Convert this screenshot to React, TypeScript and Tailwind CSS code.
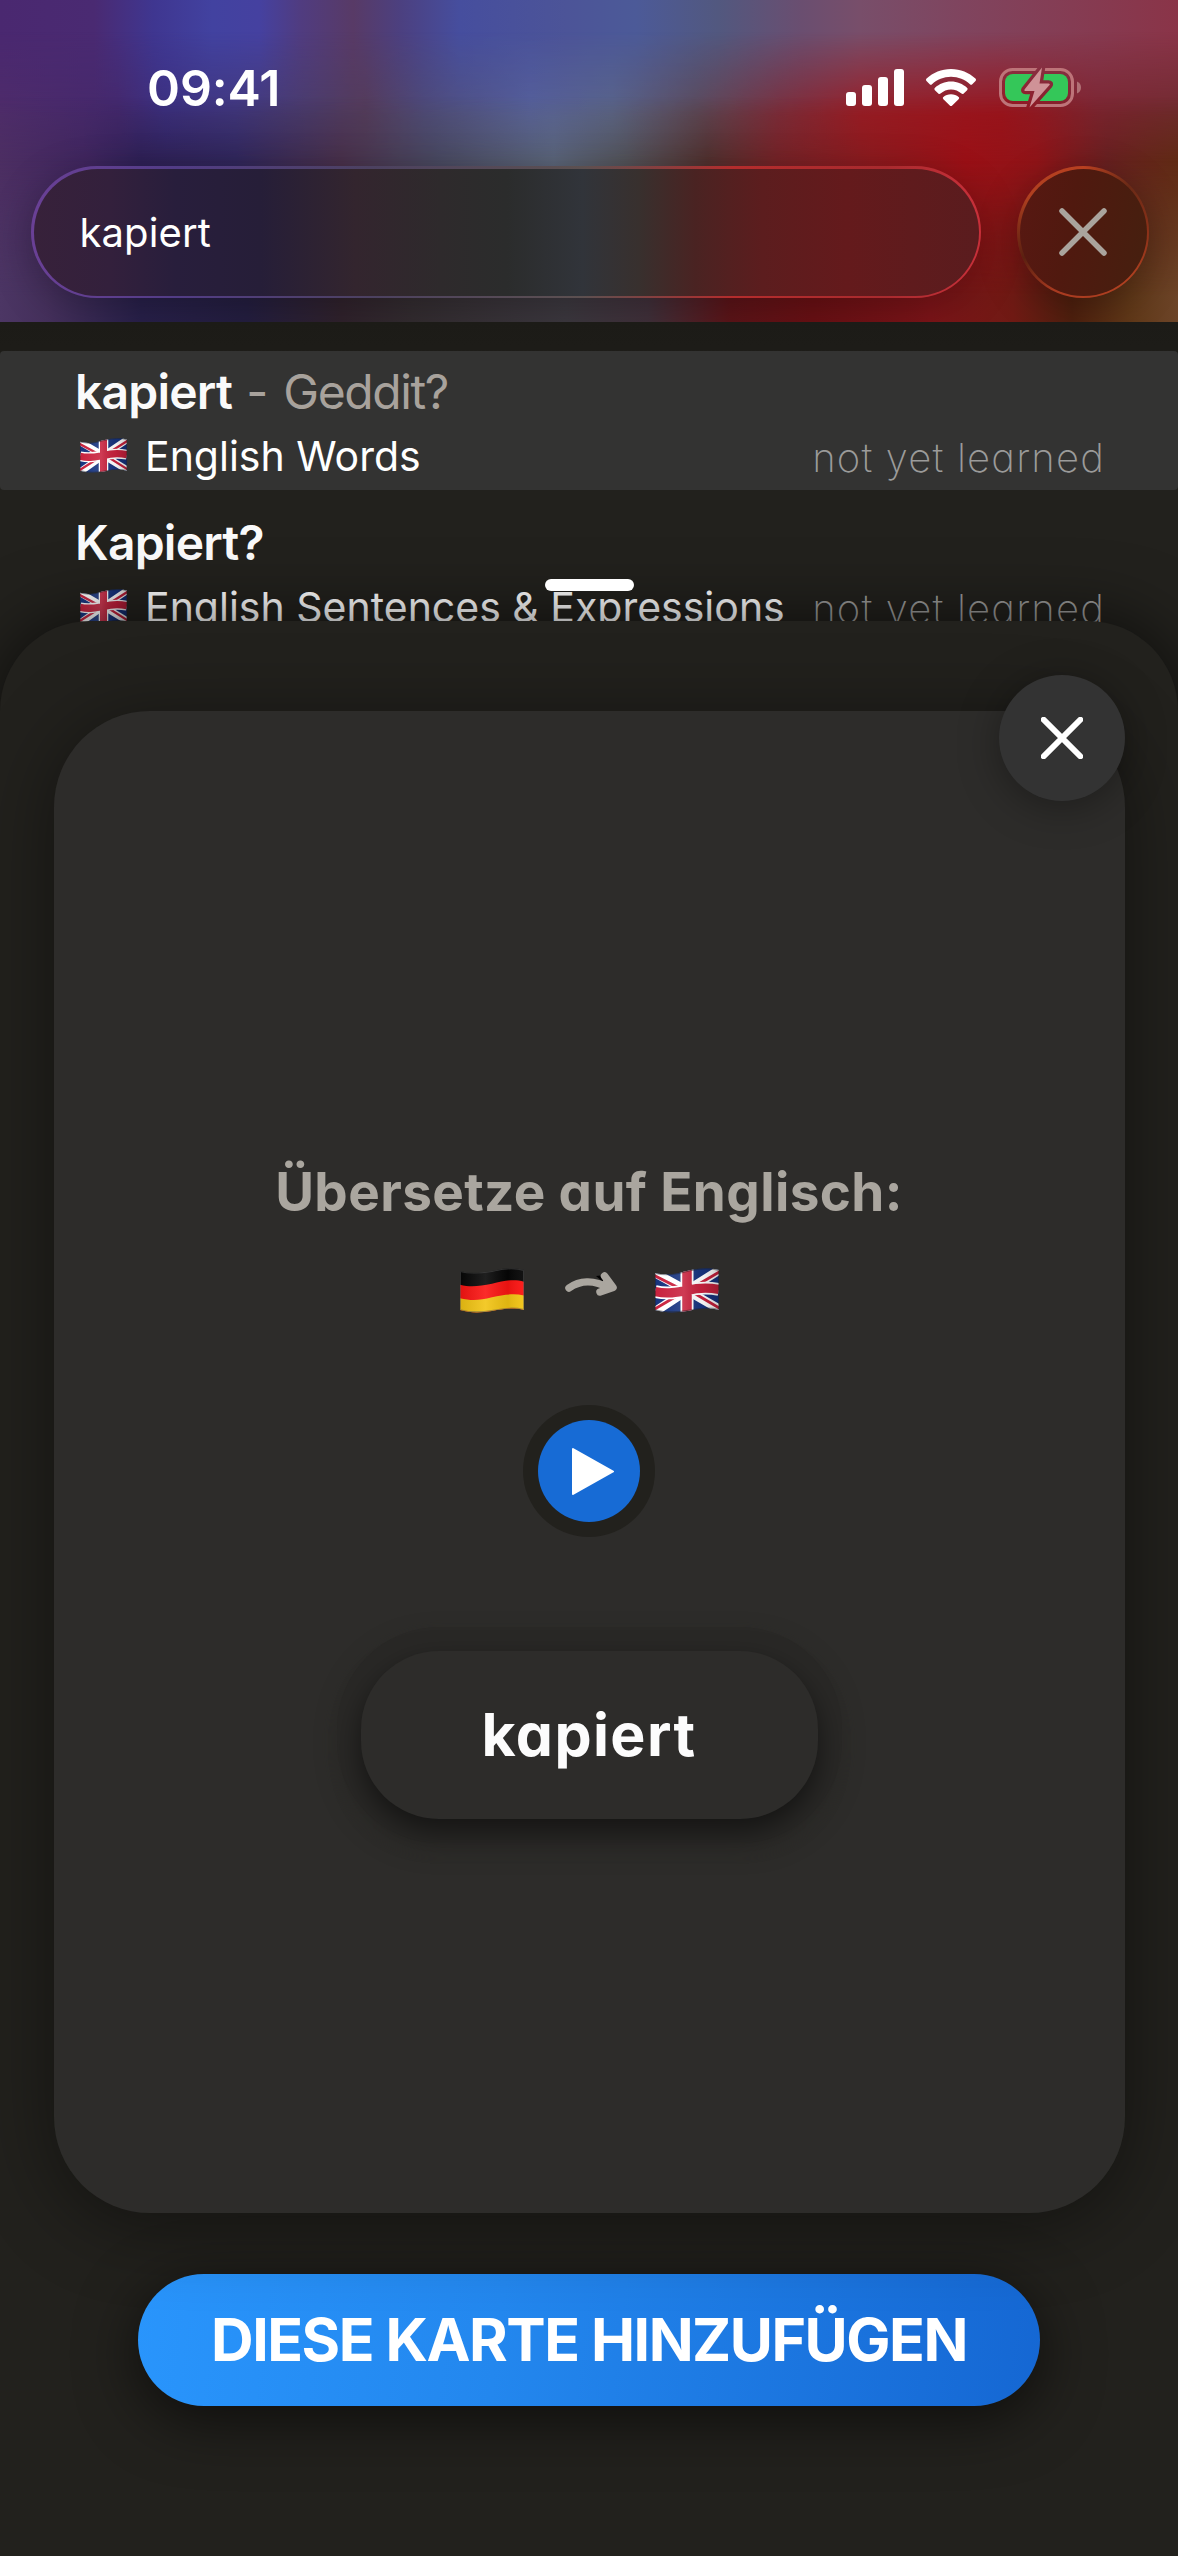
import React, { useId } from 'react';

interface SearchResult {
  term: string;
  translation?: string;
  deck: string;
  status: string;
  selected?: boolean;
}

const results: SearchResult[] = [
  { term: 'kapiert', translation: 'Geddit?', deck: 'English Words', status: 'not yet learned', selected: true },
  { term: 'Kapiert?', deck: 'English Sentences & Expressions', status: 'not yet learned' }
];

// Horizontal colour bands of the header, from top to bottom
const headerBands = [
  'h-full bg-[linear-gradient(90deg,#4a2870_0%,#4a2a72_8%,#3f3690_13%,#4242a0_18%,#4541a0_22%,#503c80_25.5%,#583a66_30%,#4c4080_34%,#464e9e_39%,#4c5498_48%,#4c5a98_54%,#52587f_61%,#6a4e70_68%,#784e6a_73%,#80445e_82%,#8a3448_100%)]',
  'h-full bg-[linear-gradient(90deg,#4e2c6a_0%,#44286c_10%,#3c3080_14%,#42387e_20%,#4a3c6c_26%,#543c5a_31%,#4e4a78_36%,#56609a_45%,#5a6488_52%,#5c4a5a_59%,#7a2e3c_66%,#981c24_73%,#98141c_85%,#7c2430_93%,#702a30_100%)] [mask-image:linear-gradient(180deg,transparent_0%,transparent_10%,#000_36%)]',
  'h-full bg-[linear-gradient(90deg,#4c2e62_0%,#40265e_7%,#2e2055_12%,#30265a_20%,#48304a_29%,#48485f_37%,#5a6478_47%,#525258_53%,#50302e_60%,#742226_66%,#8c1a1e_74%,#9a1016_82%,#901418_88%,#682020_94%,#602a14_100%)] [mask-image:linear-gradient(180deg,transparent_0%,transparent_30%,#000_50%)]',
  'h-full bg-[linear-gradient(90deg,#4c3664_0%,#45305c_4%,#28204a_12%,#241e40_21%,#30222c_29%,#332c30_35%,#3c383f_48%,#40303a_55%,#5c1418_62%,#6a1014_69%,#7c1418_79%,#701a14_86%,#50200e_91%,#603818_96%,#6c4428_100%)] [mask-image:linear-gradient(180deg,transparent_0%,transparent_50%,#000_92%)]'
];

const UnionJack = ({ className }: { className: string }) => {
  const id = useId();
  return (
    <svg viewBox="0 0 64 46" preserveAspectRatio="none" className={className}>
      <defs>
        <clipPath id={`${id}-clip`}>
          <path d="M0 5C12 8 20 6 32 3C44 0 54 -1 64 2V43C52 40 44 42 32 44C20 46 10 46 0 43Z" />
        </clipPath>
        <linearGradient id={`${id}-shade`} x1="0" x2="1" y1="0" y2="0">
          <stop offset="0" stopColor="#fff" stopOpacity="0" />
          <stop offset="0.45" stopColor="#fff" stopOpacity="0.12" />
          <stop offset="0.75" stopColor="#000" stopOpacity="0.05" />
          <stop offset="1" stopColor="#000" stopOpacity="0.2" />
        </linearGradient>
      </defs>
      <g clipPath={`url(#${id}-clip)`}>
        <path d="M0 0H64V46H0Z" fill="#16337e" />
        <path d="M-2 4L32 23L66 1M-2 46L32 23L66 43" stroke="#fff" strokeWidth="9" fill="none" />
        <path d="M-2 7L27 22M66 3L38 20M-2 43L26 26M66 42L38 25" stroke="#c8213d" strokeWidth="3" fill="none" />
        <path d="M0 24C12 27 20 25 32 23C44 20 54 20 64 22M32 0V46" stroke="#fff" strokeWidth="13" fill="none" />
        <path d="M0 24C12 27 20 25 32 23C44 20 54 20 64 22M32 0V46" stroke="#c8213d" strokeWidth="9.500" fill="none" />
        <path d="M0 0H64V46H0Z" fill={`url(#${id}-shade)`} />
        <path d="M0 5C12 8 20 6 32 3C44 0 54 -1 64 2V43C52 40 44 42 32 44C20 46 10 46 0 43Z" fill="none" stroke="#222" strokeOpacity="0.45" strokeWidth="2" />
      </g>
    </svg>
  );
};

const GermanFlag = ({ className }: { className: string }) => (
  <svg viewBox="0 0 64 46" preserveAspectRatio="none" className={className}>
    <defs>
      <clipPath id="de-clip">
        <path d="M0 3C10 6 20 5 32 3C44 0 54 -1 64 2V43C52 40 44 42 32 44C20 46 10 46 0 43Z" />
      </clipPath>
      <linearGradient id="de-shade" x1="0" x2="1" y1="0" y2="0">
        <stop offset="0" stopColor="#000" stopOpacity="0.1" />
        <stop offset="0.4" stopColor="#fff" stopOpacity="0.1" />
        <stop offset="0.75" stopColor="#000" stopOpacity="0.08" />
        <stop offset="1" stopColor="#fff" stopOpacity="0.05" />
      </linearGradient>
    </defs>
    <g clipPath="url(#de-clip)">
      <path d="M0 0H64V46H0Z" fill="#060606" />
      <path d="M0 17C12 20 20 18 32 16C44 13 54 11 64 14V46H0Z" fill="#fb1412" />
      <path d="M0 31C12 34 20 33 32 30C44 27 54 26 64 28V46H0Z" fill="#f2c413" />
      <path d="M0 0H64V46H0Z" fill="url(#de-shade)" />
      <path d="M0 3C10 6 20 5 32 3C44 0 54 -1 64 2V43C52 40 44 42 32 44C20 46 10 46 0 43Z" fill="none" stroke="#555" strokeOpacity="0.5" strokeWidth="2" />
    </g>
  </svg>
);

const Cross = ({ className, strokeWidth }: { className: string; strokeWidth: number }) => (
  <svg viewBox="0 0 48 48" className={className} fill="none" stroke="currentColor" strokeWidth={strokeWidth} strokeLinecap="round">
    <path d="M3 3L45 45M45 3L3 45" />
  </svg>
);

const StatusBar = () => (
  <div className="flex h-[166px] items-start justify-between pt-[57px] pr-[96px] pl-[147px]">
    <span className="text-[50px] leading-[62px] font-semibold tracking-[-0.1px] text-white">09:41</span>
    <div className="flex items-start pt-[9px]">
      <svg viewBox="0 0 60 40" className="mr-[21px] h-[40px] w-[60px]" fill="#fff">
        <rect x="1" y="26" width="10" height="14" rx="3" />
        <rect x="17" y="19" width="10" height="21" rx="3" />
        <rect x="33" y="11" width="10" height="29" rx="3" />
        <rect x="49" y="3" width="10" height="37" rx="3" />
      </svg>
      <svg viewBox="0 0 50 37" className="mt-[3px] mr-[23px] h-[37px] w-[50px]" fill="#fff">
        <path d="M25 0C34.500 0 43 3.600 49.400 9.600C50.200 10.400 50.200 11.300 49.500 12L46.300 15.300C45.600 16 44.700 16 44 15.300C39 10.600 32.300 7.800 25 7.800C17.700 7.800 11 10.600 6 15.300C5.300 16 4.400 16 3.700 15.300L0.500 12C-0.200 11.300 -0.200 10.400 0.600 9.600C7 3.600 15.500 0 25 0Z" />
        <path d="M25 12.600C31.200 12.600 36.800 15 41 18.800C41.800 19.500 41.800 20.500 41.100 21.200L37.700 24.500C37 25.200 36.200 25.200 35.500 24.600C32.700 22.100 29 20.500 25 20.500C21 20.500 17.300 22.100 14.500 24.600C13.800 25.200 13 25.200 12.300 24.500L8.900 21.200C8.200 20.500 8.200 19.500 9 18.800C13.200 15 18.800 12.600 25 12.600Z" />
        <path d="M25 25.300C28 25.300 30.600 26.300 32.600 28C33.400 28.700 33.300 29.600 32.600 30.300L26.200 36.400C25.500 37.100 24.500 37.100 23.800 36.400L17.400 30.300C16.700 29.600 16.600 28.700 17.400 28C19.400 26.300 22 25.300 25 25.300Z" />
      </svg>
      <svg viewBox="0 0 83 42" className="h-[42px] w-[83px]">
        <defs>
          <mask id="bolt-cut" maskUnits="userSpaceOnUse" x="0" y="-4" width="83" height="50">
            <path d="M0 -4H83V46H0Z" fill="#fff" />
            <path d="M43 1.500L25.500 23.500Q24.800 25 26.500 25H35.500L30.500 41.500L50.500 19Q51.500 17.500 49.500 17.500H40.500Z" fill="#000" stroke="#000" strokeWidth="6.500" strokeLinejoin="round" />
          </mask>
        </defs>
        <g mask="url(#bolt-cut)">
          <rect x="1.500" y="3.500" width="72" height="36" rx="12" fill="none" stroke="#bd7479" strokeWidth="3" />
          <rect x="6" y="8" width="63" height="27" rx="8" fill="#34c759" />
        </g>
        <path d="M78 15.500C80.500 16.500 82 18.800 82 21.500C82 24.200 80.500 26.500 78 27.500Z" fill="#b07075" />
        <path d="M43 1.500L25.500 23.500Q24.800 25 26.500 25H35.500L30.500 41.500L50.500 19Q51.500 17.500 49.500 17.500H40.500Z" fill="#cf9297" />
      </svg>
    </div>
  </div>
);

const SearchHeader = () => (
  <header className="relative z-0 h-[322px] overflow-hidden">
    {headerBands.map((band) => (
      <div key={band} className="absolute inset-0 -z-10">
        <div className={band} />
      </div>
    ))}
    <StatusBar />
    <div className="flex gap-9 pr-[29px] pl-[31px]">
      <div className="h-[132px] flex-1 rounded-[66px] bg-[linear-gradient(90deg,#6a4096_0%,#523c86_15%,#4c4160_36%,#5c5050_58%,#b42c2c_74%,#a82a2e_90%,#c8303a_100%)] p-[2.5px] shadow-[0_10px_40px_rgba(0,0,0,0.25)]">
        <div className="flex h-full items-center rounded-[64px] bg-[linear-gradient(90deg,#37213a_0%,#33203c_8%,#281e3c_15%,#261e38_24%,#33252e_34%,#2e2a2c_43%,#2b2c2c_50%,#31343a_58%,#38302e_64%,#4a2322_70%,#5c1d1e_77%,#641a1c_86%,#5a1c1e_100%)] pl-[46px]">
          <span className="pt-0.5 text-[40px] tracking-[0.1px] text-white">kapiert</span>
        </div>
      </div>
      <button className="size-[132px] rounded-full bg-[conic-gradient(from_45deg,#6a2a16,#8a3018_12%,#b04020_25%,#a83a20_45%,#5a2010_56%,#b04020_72%,#b84020_88%,#6a2a16)] p-[2.5px] shadow-[0_10px_40px_rgba(0,0,0,0.3)]">
        <span className="flex h-full items-center justify-center rounded-full bg-[linear-gradient(100deg,#581812_0%,#50190f_40%,#45200f_100%)] text-[#aaa49d]">
          <Cross className="size-[48px]" strokeWidth={5.5} />
        </span>
      </button>
    </div>
  </header>
);

const ResultRow = ({ result }: { result: SearchResult }) => (
  <li className={`h-[139px] rounded-[4px] pt-[12px] pr-[73px] pl-[75px] ${result.selected ? 'bg-[#333332]' : ''}`}>
    <p className="text-[48px] leading-[58px] whitespace-pre">
      <span className="font-semibold tracking-[-0.8px] text-[#fafafa]">{result.term}</span>
      {result.translation && (
        <span className="text-[#a8a29c]">
          <span className="tracking-[0.7px]"> - </span>
          <span className="tracking-[-1.4px]">{result.translation}</span>
        </span>
      )}
    </p>
    <div className="mt-[8px] flex items-start">
      <UnionJack className="mt-[9px] ml-[5px] h-[35px] w-[47px]" />
      <span className="mt-px ml-[18px] text-[41px] leading-[52px] whitespace-nowrap text-white">{result.deck}</span>
      <span className="mt-[3px] ml-auto text-[40px] leading-[52px] font-[250] tracking-[1.2px] whitespace-nowrap text-[#9b9b9a] [font-feature-settings:'cv11']">{result.status}</span>
    </div>
  </li>
);

const CardSheet = () => (
  <section className="relative z-10 h-[1935px] rounded-t-[90px] bg-[#22211d] pt-[90px] shadow-[0_0_70px_rgba(0,0,0,0.65)]">
    <div className="absolute -top-[42px] left-[545px] h-3 w-[89px] rounded-full bg-white" />
    <div className="relative mx-auto flex h-[1502px] w-[1071px] flex-col items-center rounded-[96px] bg-[#2d2c2a] shadow-[0_10px_80px_rgba(0,0,0,0.45)]">
      <button className="absolute -top-[36px] right-0 flex size-[126px] items-center justify-center rounded-full bg-[#333333] text-white shadow-[0_6px_40px_rgba(0,0,0,0.35)]">
        <Cross className="size-[42px]" strokeWidth={6.5} />
      </button>
      <h1 className="mt-[448px] text-[53px] leading-[66px] font-[650] tracking-[0.4px] whitespace-nowrap text-[#aaa69f] [font-feature-settings:'cv11']">Übersetze auf Englisch:</h1>
      <div className="mt-[43px] flex h-[45px] items-start">
        <GermanFlag className="h-[45px] w-[64px]" />
        <svg viewBox="0 0 52 26" className="mt-[4px] mr-[38px] ml-[41px] h-[26px] w-[52px] overflow-visible" fill="none" stroke="#aaa69f" strokeWidth="7.500" strokeLinecap="round" strokeLinejoin="round">
          <path d="M31 4L40 3L38 10Z" fill="#000" stroke="none" />
          <path d="M4 16C14 9 28 7 44 16" />
          <path d="M39.500 4L48 15.500L35 20Z" fill="#aaa69f" stroke="none" />
          <path d="M39.500 4L48 15.500L35 20" />
        </svg>
        <UnionJack className="h-[45px] w-[64px]" />
      </div>
      <button className="mt-[92px] flex size-[132px] items-center justify-center rounded-full bg-[#22211d]">
        <span className="flex size-[102px] items-center justify-center rounded-full bg-[#176bd5]">
          <svg viewBox="0 0 42 47" className="ml-[8px] h-[47px] w-[42px]" fill="#fff" stroke="#fff" strokeWidth="2" strokeLinejoin="round">
            <path d="M1 1L41 23.500L1 46Z" />
          </svg>
        </span>
      </button>
      <div className="mt-[90px] rounded-[102px] bg-[#292826] p-6 shadow-[0_8px_20px_rgba(41,40,38,0.8)]">
        <div className="flex h-[168px] w-[457px] items-center justify-center rounded-[78px] bg-[#2d2c2a] shadow-[0_12px_28px_rgba(0,0,0,0.5)]">
          <span className="text-[59px] leading-[70px] font-[650] tracking-[1.4px] text-[#fcfcfc] [font-feature-settings:'cv11']">kapiert</span>
        </div>
      </div>
    </div>
    <button className="mx-auto mt-[61px] flex h-[132px] w-[902px] items-center justify-center rounded-[66px] bg-[linear-gradient(97deg,#2995fc_0%,#2387ee_40%,#1567d3_100%)] text-[59px] font-bold tracking-[-1.5px] whitespace-nowrap text-white shadow-[0_14px_60px_rgba(0,0,0,0.6)]">
      DIESE KARTE HINZUFÜGEN
    </button>
  </section>
);

export default function App() {
  return (
    <main className="h-[2556px] w-[1178px] overflow-hidden bg-[#22211d] font-['Inter',sans-serif]">
      <SearchHeader />
      <div className="relative h-[299px] bg-[linear-gradient(180deg,#1c1b17_0%,#22211d_50%)] pt-[29px]">
        <ul className="flex flex-col gap-3">
          {results.map((result) => (
            <ResultRow key={result.term} result={result} />
          ))}
        </ul>
      </div>
      <CardSheet />
    </main>
  );
}
